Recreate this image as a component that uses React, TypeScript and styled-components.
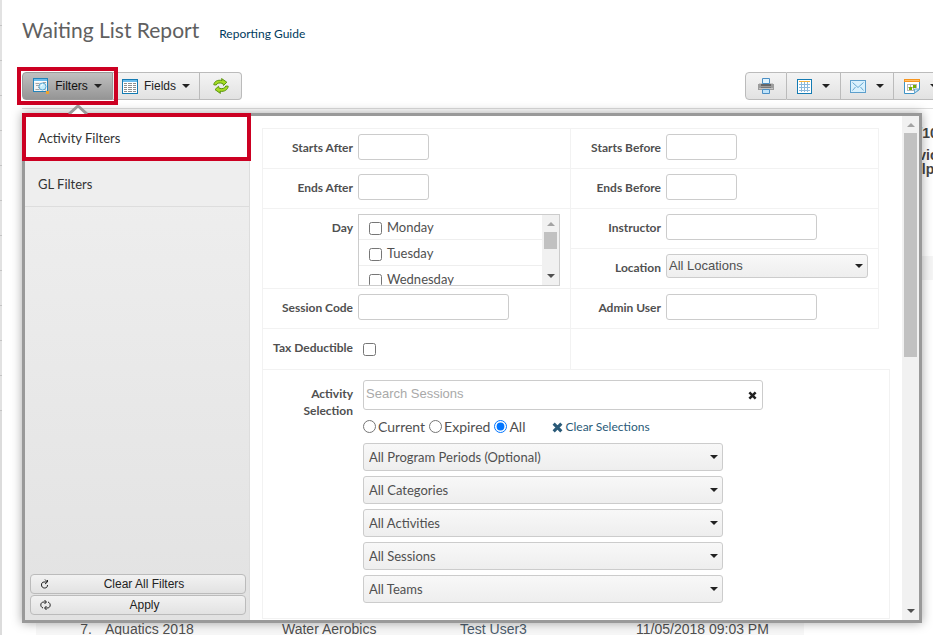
import React from "react";
import styled, { createGlobalStyle, css } from "styled-components";

const lato = `Lato, "Liberation Sans", sans-serif`;
const arial = `"Liberation Sans", Arial, sans-serif`;

const GlobalStyle = createGlobalStyle`
  *, *::before, *::after { box-sizing: border-box; }
  html, body { margin: 0; height: 100%; overflow: hidden; }
  #root { height: 100%; }
  body { background: #fff; color: #505050; font: 13px/18px ${lato}; }
  button, input, select { font: inherit; color: inherit; margin: 0; }
`;

const Page = styled.div`
  display: flex;
  height: 100%;
  overflow: hidden;
`;

const Edge = styled.div`
  width: 2px;
  flex: none;
  background:
    linear-gradient(transparent 0 411px, #dcdcdc 411px),
    repeating-linear-gradient(#e2e2e2 0 25px, #c4c4c4 25px 26px, #e2e2e2 26px 35px);
`;

const Main = styled.main`
  flex: 1;
  min-width: 0;
  display: flex;
  flex-direction: column;
  padding-left: 20px;
`;

const Header = styled.header`
  display: flex;
  align-items: baseline;
  gap: 20px;
  padding-top: 16px;
`;

const Title = styled.h1`
  margin: 0;
  font-size: 21px;
  line-height: 28px;
  font-weight: 400;
  color: #606060;
`;

const GuideLink = styled.a`
  font-size: 12px;
  line-height: 16px;
  color: #003a5d;
  text-decoration: none;
`;

const Toolbar = styled.div`
  display: flex;
  justify-content: space-between;
  margin-top: 28px;
  padding-bottom: 8px;
  border-bottom: 1px solid #ddd;
`;

const Group = styled.div<{ $wide?: boolean }>`
  display: flex;
  height: 28px;
  ${(p) => p.$wide && css`margin-right: -15px;`}
`;

const ToolButton = styled.button<{ $active?: boolean; $width: number; $gap?: number }>`
  position: relative;
  display: flex;
  align-items: center;
  justify-content: center;
  gap: ${(p) => p.$gap ?? 6}px;
  width: ${(p) => p.$width}px;
  padding: 0;
  border: 1px solid #bbb;
  border-left-width: 0;
  background: linear-gradient(#f4f4f4, #e2e2e2);
  color: #222;
  font: 12px/16px ${arial};
  &:first-child { border-left-width: 1px; border-radius: 4px 0 0 4px; }
  &:last-child { border-radius: 0 4px 4px 0; }
  ${(p) =>
    p.$active &&
    css`
      background: linear-gradient(#c0c0c0, #959595);
      border-color: #999;
      color: #111;
    `}
`;

const Highlight = styled.span<{ $inset: string }>`
  position: absolute;
  inset: ${(p) => p.$inset};
  border: 4px solid #cc0022;
  pointer-events: none;
  z-index: 5;
`;

const Caret = styled.span`
  border: 4px solid transparent;
  border-top-color: #222;
  border-bottom-width: 0;
`;

const MenuAnchor = styled.div`
  position: relative;
`;

const Panel = styled.section`
  position: absolute;
  z-index: 2;
  top: 4px;
  left: 0;
  right: 11px;
  display: flex;
  border: 3px solid #999;
  background: #fff;
  box-shadow: 0 0 10px rgba(0, 0, 0, 0.35);
`;

const Pointer = styled.svg`
  position: absolute;
  z-index: 3;
  left: 46px;
  top: -5px;
`;

const Sidebar = styled.nav`
  display: flex;
  flex-direction: column;
  width: 225px;
  flex: none;
  border-right: 1px solid #ddd;
  background: linear-gradient(#f0f0f0, #e2e2e2);
`;

const Tab = styled.button<{ $selected?: boolean }>`
  position: relative;
  height: ${(p) => (p.$selected ? 45 : 46)}px;
  padding: 0 13px;
  border: 0;
  border-bottom: 1px solid #ddd;
  background: ${(p) => (p.$selected ? "#fff" : "#eee")};
  color: #333;
  text-align: left;
`;

const Actions = styled.div`
  display: flex;
  flex-direction: column;
  gap: 1px;
  margin-top: auto;
  padding: 0 3px 5px 5px;
`;

const Action = styled.button`
  display: flex;
  align-items: center;
  height: 20px;
  padding: 0 7px 0 9px;
  border: 1px solid #bbb;
  border-radius: 4px;
  background: linear-gradient(#f2f2f2, #e2e2e2);
  color: #222;
  font: 12px/16px ${arial};
  span { flex: 1; }
`;

const Filters = styled.form`
  flex: 1;
  min-width: 0;
  padding: 12px 12px 0;
`;

const Grid = styled.div`
  display: grid;
  grid-template-columns: 1fr 1fr;
  grid-auto-rows: 40px;
  margin-right: 11px;
  border: solid #f2f2f2;
  border-width: 1px 0 0 1px;
`;

const Cell = styled.div<{ $span?: number; $last?: boolean; $side: "left" | "right" }>`
  display: flex;
  gap: 5px;
  grid-column: ${(p) => (p.$side === "left" ? 1 : 2)};
  grid-row: span ${(p) => p.$span ?? 1};
  padding-top: 5px;
  border: solid #f2f2f2;
  border-width: 0 1px ${(p) => (p.$last ? 0 : 1)}px 0;
`;

const Label = styled.label`
  width: 90px;
  flex: none;
  padding-top: 5px;
  font-size: 12px;
  line-height: 17px;
  font-weight: 700;
  text-align: right;
`;

const GroupLabel = styled(Label).attrs({ as: "span" })``;

const TextBox = styled.input<{ $long?: boolean }>`
  width: ${(p) => (p.$long ? 151 : 71)}px;
  height: 26px;
  border: 1px solid #ccc;
  border-radius: 3px;
  background: #fff;
`;

const arrow = `url("data:image/svg+xml,%3Csvg xmlns='http://www.w3.org/2000/svg' width='8' height='4'%3E%3Cpath d='M0 0h8L4 4z' fill='%23222'/%3E%3C/svg%3E")`;

const Select = styled.select<{ $compact?: boolean }>`
  appearance: none;
  display: block;
  width: ${(p) => (p.$compact ? 202 : 360)}px;
  height: ${(p) => (p.$compact ? 24 : 28)}px;
  padding: 0 20px 0 ${(p) => (p.$compact ? 2 : 5)}px;
  border: 1px solid #ccc;
  border-radius: 3px;
  background: ${arrow} no-repeat right 4px center, linear-gradient(#f8f8f8, #eee);
  ${(p) => p.$compact && css`font: 13px/16px ${arial};`}
`;

const DayList = styled.div`
  display: flex;
  width: 202px;
  height: 72px;
  border: 1px solid #ccc;
  overflow: hidden;
`;

const Days = styled.div`
  flex: 1;
  margin-top: -1px;
`;

const Day = styled.label`
  display: flex;
  align-items: center;
  gap: 5px;
  height: 26px;
  padding-left: 10px;
  border-bottom: 1px solid #eee;
`;

const Check = styled.input.attrs({ type: "checkbox" })`
  width: 13px;
  height: 13px;
`;

const DayCheck = styled(Check)`
  margin-top: 3px;
`;

const TaxCheck = styled(Check)`
  margin: 9px 0 0 5px;
`;

const Scroll = styled.div`
  display: flex;
  flex-direction: column;
  align-items: center;
  width: 17px;
  flex: none;
  padding: 7px 0;
  background: #f1f1f1;
`;

const ScrollArrow = styled.span<{ $down?: boolean }>`
  border: 4px solid transparent;
  ${(p) =>
    p.$down
      ? css`border-top-color: #505050; border-bottom-width: 0; margin-top: auto;`
      : css`border-bottom-color: #a3a3a3; border-top-width: 0;`}
`;

const Thumb = styled.span<{ $size: number }>`
  width: 13px;
  height: ${(p) => p.$size}px;
  margin-top: 6px;
  background: #c1c1c1;
`;

const ActivityRow = styled.div`
  display: flex;
  gap: 10px;
  padding: 10px 0 15px;
  border: 1px solid #f2f2f2;
  margin-bottom: 1px;
`;

const Activity = styled.div`
  display: flex;
  flex-direction: column;
  gap: 5px;
`;

const SearchBox = styled.div`
  display: flex;
  align-items: center;
  width: 400px;
  height: 30px;
  padding: 0 5px 0 2px;
  border: 1px solid #ccc;
  border-radius: 3px;
  input {
    flex: 1;
    min-width: 0;
    padding: 0 0 3px;
    border: 0;
    outline: 0;
    font: 13px/16px ${arial};
  }
  input::placeholder { color: #a9a9a9; }
  button { display: flex; padding: 0; border: 0; background: none; color: #222; }
`;

const Scope = styled.div`
  display: flex;
  align-items: center;
  gap: 4px;
  height: 23px;
  font-size: 14px;
  label { display: flex; align-items: center; gap: 2px; }
  input { width: 13px; height: 13px; }
`;

const ClearLink = styled.a`
  display: flex;
  align-items: center;
  gap: 2px;
  margin-left: 23px;
  padding-top: 1px;
  font-size: 12px;
  color: #2a5a78;
  text-decoration: none;
`;

const Stack = styled.div`
  display: flex;
  flex-direction: column;
  gap: 5px;
`;

const Report = styled.div`
  flex: 1;
  display: flex;
  flex-direction: column;
  padding-top: 17px;
  font: 13px/16px ${arial};
`;

const Meta = styled.div`
  align-self: flex-end;
  width: 22px;
  margin-right: -6px;
  color: #444;
  font-weight: 700;
  font-size: 14px;
  line-height: 14px;
  text-align: center;
  white-space: nowrap;
  p { margin: 0 0 8px; }
`;

const Band = styled.div`
  height: 24px;
  margin-top: 72px;
  background: #f5f5f5;
`;

const Rows = styled.table`
  width: 768px;
  margin: auto 0 -1px 14px;
  border-collapse: collapse;
  table-layout: fixed;
  background: #f7f7f7;
  font-size: 14px;
  td { padding: 0; height: 14px; line-height: 14px; white-space: nowrap; }
  td:first-child { padding-right: 13px; text-align: right; }
  a { color: #4c5c6c; text-decoration: none; }
`;

const FilterIcon = () => (
  <svg width="16" height="16" viewBox="0 0 16 16" aria-hidden="true">
    <rect x=".5" y=".5" width="14" height="13" fill="#f4f4f4" stroke="#2484ba" />
    <path d="M1 2h13" stroke="#6dbdec" strokeWidth="2" />
    <path d="M1 3.500h13" stroke="#fff" />
    <path d="M2.500 5.500h4M3 7.500h3M2.500 11.500h4M5 9.500h1M10 4.500h3" stroke="#a6a6a6" />
    <circle cx="9.500" cy="8.500" r="3.500" fill="#c5edfc" stroke="#5aa7d3" />
    <path d="M8 8.500a2 2 0 0 1 2-2" fill="none" stroke="#fff" />
    <path d="M12 11.500l1 1" stroke="#777" />
    <path d="M13 13h3v3h-3z" fill="#eda32f" />
  </svg>
);

const FieldsIcon = () => (
  <svg width="16" height="15" viewBox="0 0 16 15" aria-hidden="true">
    <rect x=".5" y=".5" width="15" height="14" fill="#fff" stroke="#147bb3" />
    <path d="M1 2h14" stroke="#6dbdec" strokeWidth="2" />
    <path
      d="M2 4.500h3m1 0h4m1 0h3M2 6.500h3m1 0h4m1 0h3M2 8.500h3m1 0h4m1 0h3M2 10.500h3m1 0h4m1 0h3M2 12.500h3m1 0h4m1 0h3"
      stroke="#8e8e8e"
    />
  </svg>
);

const Refresh = () => (
  <svg width="16" height="16" viewBox="0 0 16 16" aria-hidden="true">
    <g fill="#a5dc22" stroke="#5a940f" strokeLinejoin="round">
      <path d="M.8 6.800C1 3.500 4.500 1.500 9 2.500L8.600.6l5.200 3.600-3.300 3.300-.6-1.900C7 4.400 4 4.800 3.200 7z" />
      <path d="M15.200 8.200c-.2 3.300-3.700 5.800-8.200 5.100l.4 2.100-5.400-3.800 3.500-3.300.6 1.900c2.900 1 5.800.4 6.700-2.200z" />
    </g>
  </svg>
);

const Printer = () => (
  <svg width="16" height="16" viewBox="0 0 16 16" aria-hidden="true">
    <path d="M1 5h14v1h1v6H0V6h1z" fill="#9c9c9c" />
    <path d="M1 5.500h14" stroke="#c9c9c9" />
    <path d="M4.500 5.500v-5h7v5z" fill="#e1f4ff" stroke="#4c8fc4" />
    <path d="M3 7h10" stroke="#666" strokeWidth="2" />
    <path d="M1 10.500h14" stroke="#c4c4c4" />
    <path d="M3 9.500h10" stroke="#777" />
    <path d="M4.500 11.500v4h7v-4z" fill="#bfe3fa" stroke="#4c8fc4" />
  </svg>
);

const TableIcon = () => (
  <svg width="15" height="15" viewBox="0 0 15 15" aria-hidden="true">
    <rect x=".5" y=".5" width="14" height="14" fill="#fff" stroke="#147bb3" />
    <path d="M2 2.500h11" stroke="#f9b53c" />
    <path d="M2 5.500h11M2 8.500h11M2 11.500h11M4.500 3v10M7.500 3v10M10.500 3v10" stroke="#8db9da" />
  </svg>
);

const Mail = () => (
  <svg width="16" height="13" viewBox="0 0 16 13" aria-hidden="true">
    <rect x=".5" y=".5" width="15" height="12" fill="#d9f1fd" stroke="#5d9fcc" />
    <path d="M2.500 2.500l5.500 5 5.500-5M2.500 10.500l3-3.500M13.500 10.500l-3-3.500" fill="none" stroke="#67a8d2" />
  </svg>
);

const Calendar = () => (
  <svg width="16" height="15" viewBox="0 0 16 15" aria-hidden="true">
    <path d="M.5 2v12.500H10l5.500-4V2" fill="#fff" stroke="#3d93c6" />
    <path d="M0 1.500h16" stroke="#f6941e" strokeWidth="3" />
    <path d="M1 1.500h14" stroke="#ffc06a" />
    <path d="M3 5.500h10M3 8.500h10M3 11.500h7M3.500 5v7M6.500 5v7M9.500 5v7M12.500 5v4" stroke="#b5b5b5" />
    <path d="M9 6h3v3H9zM5 8h3v3H5z" fill="#76b000" />
    <path d="M10.500 14v-4h5z" fill="#cdeafa" stroke="#6aa9d0" />
  </svg>
);

const Cross = ({ size }: { size: number }) => (
  <svg width={size} height={size} viewBox="0 0 10 10" aria-hidden="true">
    <path d="M1.500 1.500l7 7M8.500 1.500l-7 7" stroke="currentColor" strokeWidth="2.800" />
  </svg>
);

const ClearIcon = () => (
  <svg width="10" height="10" viewBox="0 0 10 10" aria-hidden="true" fill="none" stroke="#222">
    <path d="M7 3H4C2 3 1.500 4.500 1.500 6S2.500 9 4.500 9 7.500 8 7.500 6M5 .5L7.500 3 5 5M7.500 1v2" />
  </svg>
);

const ApplyIcon = () => (
  <svg width="11" height="12" viewBox="0 0 11 12" aria-hidden="true" fill="none" stroke="#222">
    <path d="M3 9C1.500 8.500.8 7 .8 6 .8 4 2 3 4 3h2M4.500 1L6.500 3l-2 2M8 3c1.500.5 2.200 2 2.200 3 0 2-1.200 3-3.200 3H5M6.500 7l-2 2 2 2" />
  </svg>
);

const dropdowns = ["All Program Periods (Optional)", "All Categories", "All Activities", "All Sessions", "All Teams"];

type FieldProps = { id: string; label: string; side: "left" | "right"; long?: boolean };

const Field = ({ id, label, side, long }: FieldProps) => (
  <Cell $side={side}>
    <Label htmlFor={id}>{label}</Label>
    <TextBox id={id} type="text" $long={long} />
  </Cell>
);

export default function App() {
  return (
    <Page>
      <GlobalStyle />
      <Edge />
      <Main>
        <Header>
          <Title>Waiting List Report</Title>
          <GuideLink href="#guide">Reporting Guide</GuideLink>
        </Header>
        <Toolbar>
          <Group>
            <ToolButton $active $width={91}>
              <FilterIcon /> Filters <Caret />
              <Highlight $inset="-6px" />
            </ToolButton>
            <ToolButton $width={87}>
              <FieldsIcon /> Fields <Caret />
            </ToolButton>
            <ToolButton $width={42} aria-label="Refresh"><Refresh /></ToolButton>
          </Group>
          <Group $wide>
            <ToolButton $width={42} aria-label="Print"><Printer /></ToolButton>
            <ToolButton $width={54} $gap={10} aria-label="Table"><TableIcon /><Caret /></ToolButton>
            <ToolButton $width={53} $gap={10} aria-label="Email"><Mail /><Caret /></ToolButton>
            <ToolButton $width={54} $gap={10} aria-label="Schedule"><Calendar /><Caret /></ToolButton>
          </Group>
        </Toolbar>
        <MenuAnchor>
          <Pointer width="20" height="10" viewBox="0 0 20 10" aria-hidden="true">
            <path d="M1 10l9-8 9 8" fill="#fff" stroke="#999" strokeWidth="3" />
          </Pointer>
          <Panel>
            <Sidebar>
              <Tab $selected>
                Activity Filters
                <Highlight $inset="-3px -2px -1px -3px" />
              </Tab>
              <Tab>GL Filters</Tab>
              <Actions>
                <Action><ClearIcon /><span>Clear All Filters</span></Action>
                <Action><ApplyIcon /><span>Apply</span></Action>
              </Actions>
            </Sidebar>
            <Filters>
              <Grid>
                <Field side="left" id="starts-after" label="Starts After" />
                <Field side="right" id="starts-before" label="Starts Before" />
                <Field side="left" id="ends-after" label="Ends After" />
                <Field side="right" id="ends-before" label="Ends Before" />
                <Cell $side="left" $span={2}>
                  <GroupLabel>Day</GroupLabel>
                  <DayList>
                    <Days>
                      {["Monday", "Tuesday", "Wednesday"].map((d) => (
                        <Day key={d}><DayCheck />{d}</Day>
                      ))}
                    </Days>
                    <Scroll>
                      <ScrollArrow />
                      <Thumb $size={17} />
                      <ScrollArrow $down />
                    </Scroll>
                  </DayList>
                </Cell>
                <Field side="right" id="instructor" label="Instructor" long />
                <Cell $side="right">
                  <Label htmlFor="location">Location</Label>
                  <Select id="location" $compact><option>All Locations</option></Select>
                </Cell>
                <Field side="left" id="session-code" label="Session Code" long />
                <Field side="right" id="admin-user" label="Admin User" long />
                <Cell $side="left" $last>
                  <Label htmlFor="tax">Tax Deductible</Label>
                  <TaxCheck id="tax" />
                </Cell>
              </Grid>
              <ActivityRow>
                <Label htmlFor="search">Activity Selection</Label>
                <Activity>
                  <SearchBox>
                    <input id="search" type="text" placeholder="Search Sessions" />
                    <button type="button" aria-label="Clear search"><Cross size={9} /></button>
                  </SearchBox>
                  <Scope>
                    <label><input type="radio" name="scope" />Current</label>
                    <label><input type="radio" name="scope" />Expired</label>
                    <label><input type="radio" name="scope" defaultChecked />All</label>
                    <ClearLink href="#clear"><Cross size={11} />Clear Selections</ClearLink>
                  </Scope>
                  <Stack>
                    {dropdowns.map((d) => (
                      <Select key={d} aria-label={d}><option>{d}</option></Select>
                    ))}
                  </Stack>
                </Activity>
              </ActivityRow>
            </Filters>
            <Scroll>
              <ScrollArrow />
              <Thumb $size={224} />
              <ScrollArrow $down />
            </Scroll>
          </Panel>
        </MenuAnchor>
        <Report>
          <Meta>
            <p>/10</p>
            <p>vic<br />lp</p>
          </Meta>
          <Band />
          <Rows>
            <colgroup>
              <col width="69" /><col width="177" /><col width="178" /><col width="176" /><col />
            </colgroup>
            <tbody>
              <tr>
                <td>7.</td>
                <td>Aquatics 2018</td>
                <td>Water Aerobics</td>
                <td><a href="#user">Test User3</a></td>
                <td>11/05/2018 09:03 PM</td>
              </tr>
            </tbody>
          </Rows>
        </Report>
      </Main>
    </Page>
  );
}
